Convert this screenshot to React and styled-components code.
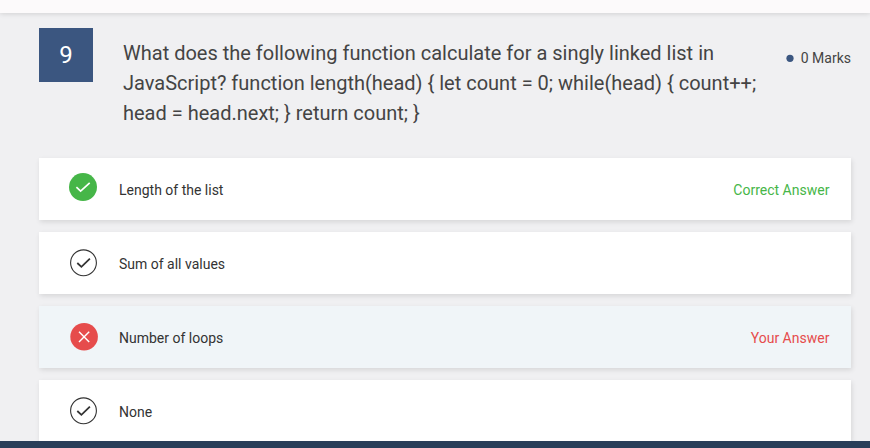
import React from "react";
import styled, { createGlobalStyle } from "styled-components";

const GlobalStyle = createGlobalStyle`
  * { box-sizing: border-box; }
  body {
    margin: 0;
    overflow: hidden;
    background: #f0f0f2;
    font-family: Roboto, "Liberation Sans", sans-serif;
    color: #333;
  }
`;

const Page = styled.div`
  display: flex;
  flex-direction: column;
  height: 448px;
  overflow: hidden;
  background: #f0f0f2;
`;

const TopBar = styled.header`
  flex: none;
  height: 13px;
  background: #fcfafb;
  box-shadow: 0 1px 5px rgba(0, 0, 0, 0.13);
`;

const Content = styled.main`
  flex: 1;
  min-height: 0;
  overflow: hidden;
  padding: 15px 19px 0 39px;
`;

const Question = styled.section`
  display: flex;
  align-items: flex-start;
  height: 130px;
`;

const NumberBox = styled.div`
  display: flex;
  align-items: center;
  justify-content: center;
  flex: none;
  width: 54px;
  height: 54px;
  background: #3b5680;
  color: #fff;
  font-size: 24px;
`;

const QuestionText = styled.h1`
  flex: none;
  width: 650px;
  margin: 10px 0 0 30px;
  font-size: 20px;
  font-weight: 400;
  line-height: 30px;
  color: #444;
  white-space: nowrap;
`;

const Marks = styled.div`
  display: flex;
  align-items: center;
  gap: 7px;
  flex: none;
  margin: 20px 0 0 auto;
  font-size: 14px;
  line-height: 20px;
  color: #444;
`;

const Dot = styled.svg`
  flex: none;
  width: 8px;
  height: 8px;
  fill: #3b5680;
`;

const Answers = styled.div`
  display: flex;
  flex-direction: column;
  gap: 12px;
`;

const AnswerRow = styled.div`
  display: flex;
  align-items: center;
  flex: none;
  height: 62px;
  padding: 2px 21.6px 0 29px;
  background: ${(p) => (p.$selected ? "#f0f5f8" : "#fff")};
  box-shadow: 1px 2px 5px rgba(0, 0, 0, 0.11);
  font-size: 14px;
  line-height: 20px;
`;

const Icon = styled.svg`
  flex: none;
  width: 30px;
  height: 32px;
  margin-right: 21px;
  overflow: visible;
`;

const Verdict = styled.span`
  margin-left: auto;
  color: ${(p) => (p.$correct ? "#46b648" : "#e64c4c")};
`;

const Footer = styled.footer`
  flex: none;
  height: 7px;
  background: #293e59;
`;

function StateIcon({ state }) {
  if (state === "correct") {
    return (
      <Icon viewBox="0 0 30 32" fill="none">
        <circle cx="15" cy="13.1" r="14" fill="#46b648" />
        <path d="M8.4 13.1 12.6 17.1 21.7 8.8" stroke="#fff" strokeWidth="1.7" />
      </Icon>
    );
  }
  if (state === "wrong") {
    return (
      <Icon viewBox="0 0 30 32" fill="none">
        <circle cx="16.1" cy="14.7" r="13.8" fill="#e64c4c" />
        <path d="M11 9.7 21.2 19.9M21.2 9.7 11 19.9" stroke="#fff" strokeWidth="1.4" />
      </Icon>
    );
  }
  return (
    <Icon viewBox="0 0 30 32" fill="none">
      <circle cx="15.5" cy="14.8" r="12.9" stroke="#333" strokeWidth="1.1" />
      <path d="M9.3 15 13.4 18.8 21.9 10.7" stroke="#333" strokeWidth="1.8" />
    </Icon>
  );
}

const answers = [
  { text: "Length of the list", state: "correct", verdict: "Correct Answer" },
  { text: "Sum of all values", state: "idle" },
  { text: "Number of loops", state: "wrong", verdict: "Your Answer" },
  { text: "None", state: "idle" },
];

export default function App() {
  return (
    <Page>
      <GlobalStyle />
      <TopBar />
      <Content>
        <Question>
          <NumberBox>9</NumberBox>
          <QuestionText>
            What does the following function calculate for a singly linked list in
            <br />
            {"JavaScript? function length(head) { let count = 0; while(head) { count++;"}
            <br />
            {"head = head.next; } return count; }"}
          </QuestionText>
          <Marks>
            <Dot viewBox="0 0 8 8">
              <circle cx="4" cy="4.3" r="3.6" />
            </Dot>
            0 Marks
          </Marks>
        </Question>
        <Answers>
          {answers.map((a) => (
            <AnswerRow key={a.text} $selected={a.state === "wrong"}>
              <StateIcon state={a.state} />
              <span>{a.text}</span>
              {a.verdict && <Verdict $correct={a.state === "correct"}>{a.verdict}</Verdict>}
            </AnswerRow>
          ))}
        </Answers>
      </Content>
      <Footer />
    </Page>
  );
}
